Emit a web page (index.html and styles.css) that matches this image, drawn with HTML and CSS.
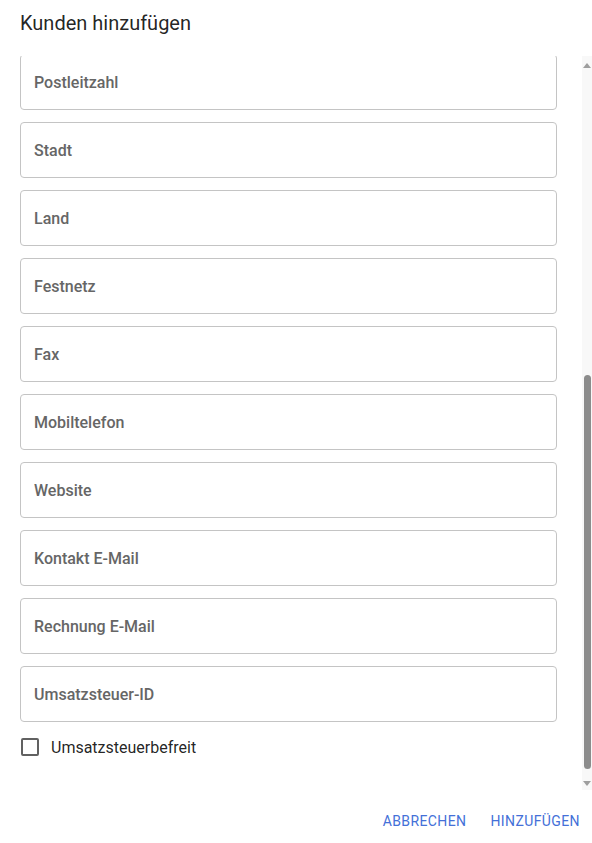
FILE: index.html
```html
<!DOCTYPE html>
<html lang="de">

<head>
  <meta charset="UTF-8">
  <meta name="viewport" content="width=device-width, initial-scale=1.0">
  <title>Kunden hinzufügen</title>
  <link rel="stylesheet" href="styles.css">
</head>

<body>
  <div class="dialog">
    <h2 class="dialog-title">Kunden hinzufügen</h2>

    <div class="scroll-wrap">
      <div class="dialog-content" id="content">
        <input class="field" type="text" placeholder="Kundennummer">
        <input class="field" type="text" placeholder="Firma">
        <input class="field" type="text" placeholder="Anrede">
        <input class="field" type="text" placeholder="Vorname">
        <input class="field" type="text" placeholder="Nachname">
        <input class="field" type="text" placeholder="Straße">
        <input class="field" type="text" placeholder="Hausnummer">
        <input class="field" type="text" placeholder="Adresszusatz">
        <input class="field" type="text" placeholder="Postleitzahl" id="first">
        <input class="field" type="text" placeholder="Stadt">
        <input class="field" type="text" placeholder="Land">
        <input class="field" type="text" placeholder="Festnetz">
        <input class="field" type="text" placeholder="Fax">
        <input class="field" type="text" placeholder="Mobiltelefon">
        <input class="field" type="text" placeholder="Website">
        <input class="field" type="text" placeholder="Kontakt E-Mail">
        <input class="field" type="text" placeholder="Rechnung E-Mail">
        <input class="field" type="text" placeholder="Umsatzsteuer-ID">

        <label class="check">
          <input type="checkbox">
          <span>Umsatzsteuerbefreit</span>
        </label>
      </div>

      <!-- eigene Scrollbar, der Browser blendet seine aus -->
      <div class="scrollbar">
        <div class="sb-btn"><span class="arrow-up"></span></div>
        <div class="sb-track" id="track">
          <div class="sb-thumb" id="thumb"></div>
        </div>
        <div class="sb-btn"><span class="arrow-down"></span></div>
      </div>
    </div>

    <div class="dialog-actions">
      <button class="btn">Abbrechen</button>
      <button class="btn">Hinzufügen</button>
    </div>
  </div>

  <script>
    // Liste so weit scrollen, dass "Postleitzahl" oben steht
    var content = document.getElementById("content");
    var first = document.getElementById("first");
    content.scrollTop = first.offsetTop - content.offsetTop + 2;

    // Daumen der Scrollbar passend setzen
    var track = document.getElementById("track");
    var thumb = document.getElementById("thumb");
    var len = track.clientHeight;
    var total = content.scrollHeight;
    thumb.style.height = Math.round(len * content.clientHeight / total) + "px";
    thumb.style.marginTop = Math.round(len * content.scrollTop / total) + "px";
  </script>
</body>

</html>
```

FILE: styles.css
```css
body {
  margin: 0;
  font-family: Roboto, "Liberation Sans", sans-serif;
  background: #fff;
  overflow: hidden;
}

.dialog {
  width: 592px;
  height: 843px;
}

.dialog-title {
  margin: 0;
  height: 44px;
  padding: 12px 20px 0;
  font-size: 20px;
  font-weight: 400;
  line-height: 23px;
  color: rgba(0, 0, 0, 0.87);
}

.scroll-wrap {
  display: flex;
  height: 734px;
}

.dialog-content {
  flex: 1;
  overflow: hidden;
  padding: 18px 25px 33px 20px;
  display: flex;
  flex-direction: column;
  gap: 12px;
}

.scrollbar {
  width: 10px;
  background: #f8f8f8;
  display: flex;
  flex-direction: column;
}

.sb-btn {
  height: 16px;
  display: flex;
  justify-content: center;
  align-items: flex-start;
}

.arrow-up {
  margin-top: 7px;
  border-left: 4px solid transparent;
  border-right: 4px solid transparent;
  border-bottom: 5px solid #9e9e9e;
}

.arrow-down {
  margin-top: 7px;
  border-left: 4px solid transparent;
  border-right: 4px solid transparent;
  border-top: 5px solid #9e9e9e;
}

.sb-track {
  flex: 1;
}

.sb-thumb {
  width: 7px;
  margin-left: 2px;
  border-radius: 4px;
  background: #8c8c8c;
}

.field {
  flex: none;
  height: 56px;
  width: 100%;
  box-sizing: border-box;
  margin: 0;
  padding: 0 13px;
  border: 1px solid #c4c4c4;
  border-radius: 4px;
  font-family: inherit;
  font-size: 16px;
  font-weight: 500;
  color: rgba(0, 0, 0, 0.87);
  outline: none;
}

.field::placeholder {
  color: #666;
  opacity: 1;
}

.check {
  flex: none;
  display: flex;
  align-items: center;
  gap: 12px;
  height: 40px;
  margin-top: -7px;
  padding-left: 1px;
  font-size: 16px;
  color: rgba(0, 0, 0, 0.87);
}

.check input {
  appearance: none;
  margin: 0;
  width: 18px;
  height: 18px;
  border: 2px solid #616161;
  border-radius: 2px;
  box-sizing: border-box;
}

.dialog-actions {
  display: flex;
  justify-content: flex-end;
  gap: 8px;
  padding: 13px 4px 0 0;
}

.btn {
  height: 36px;
  padding: 0 8px;
  border: none;
  background: none;
  font-family: inherit;
  font-size: 14px;
  font-weight: 400;
  letter-spacing: 0.4px;
  text-transform: uppercase;
  color: #4470d8;
}
```
